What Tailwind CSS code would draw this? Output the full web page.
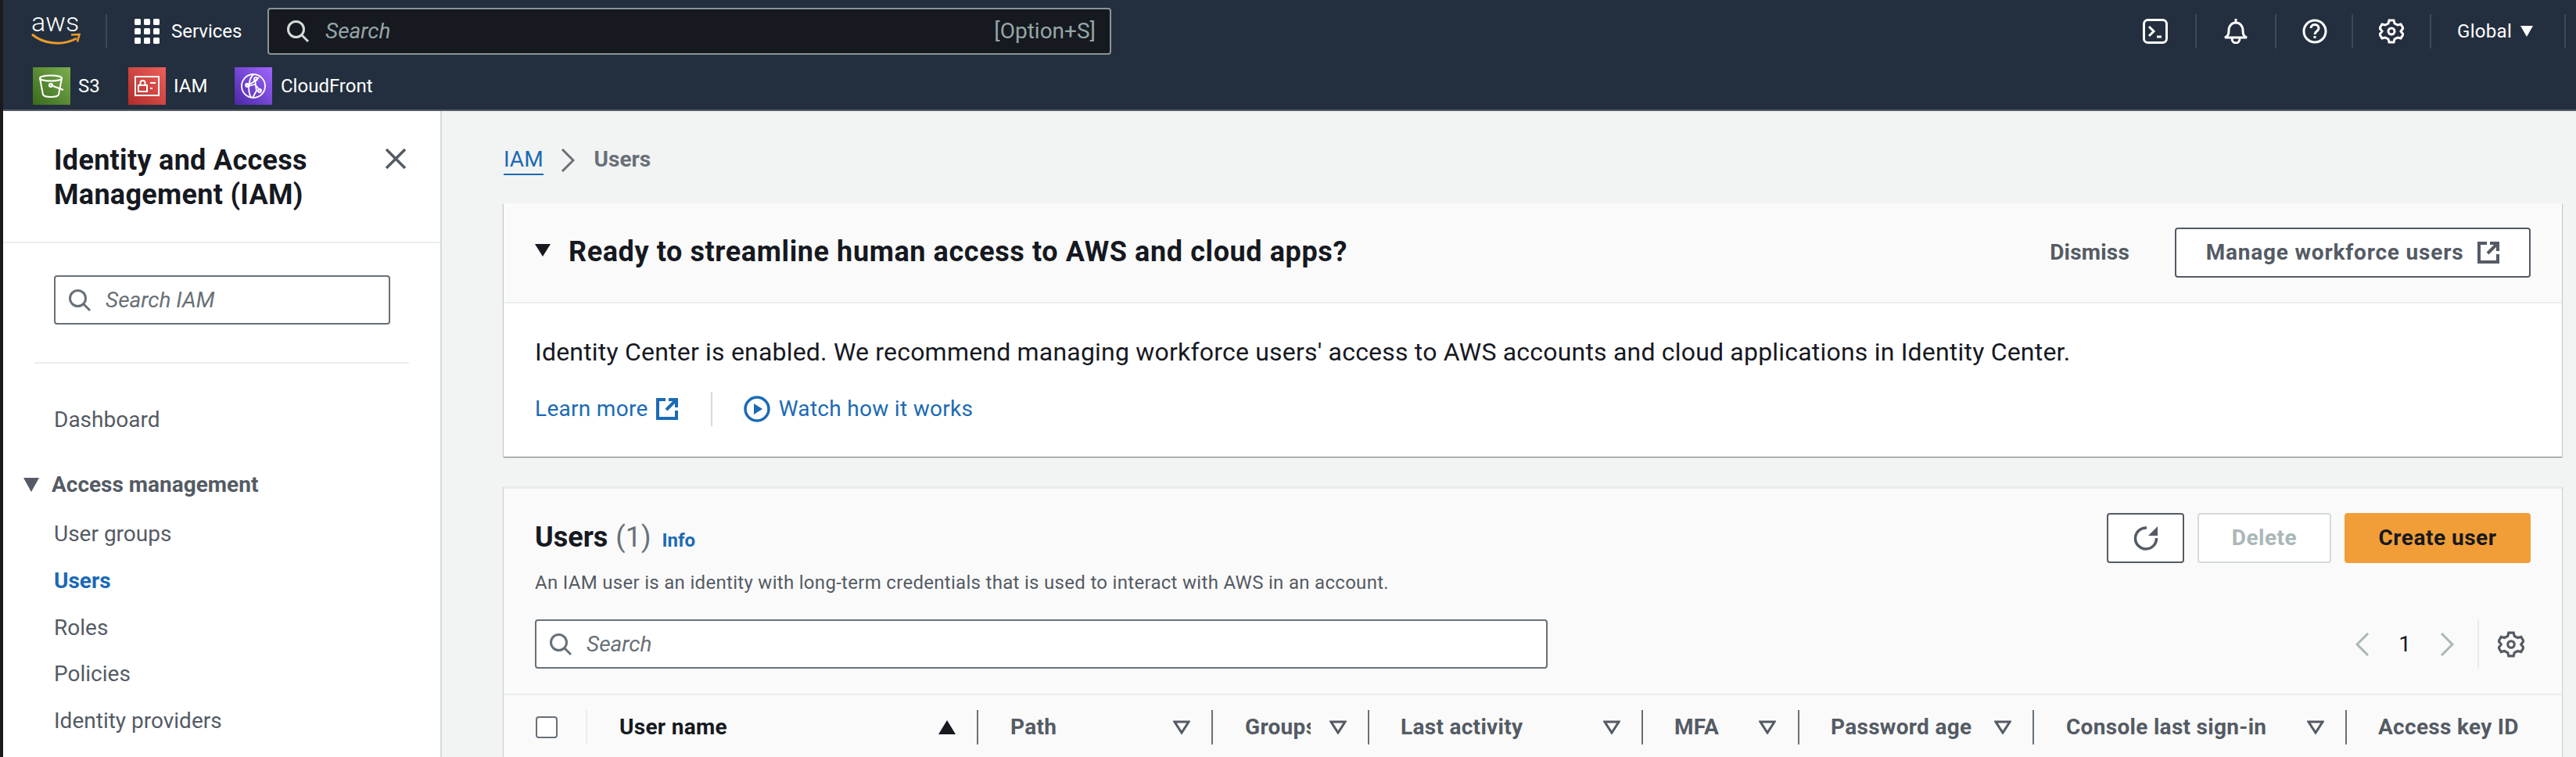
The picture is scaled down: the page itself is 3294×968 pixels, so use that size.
<!DOCTYPE html>
<html lang="en">

<head>
    <meta charset="UTF-8">
    <script src="https://cdn.jsdelivr.net/npm/@tailwindcss/browser@4"></script>
    <title>IAM - Users</title>
</head>

<body class="w-[3294px] h-[968px] overflow-hidden bg-[#f2f3f3] font-['Roboto',sans-serif] border-l-4 border-[#1a1a1a]">
    <!-- top nav -->
    <header class="h-[142px] bg-[#232f3e] border-b-2 border-[#545b64] text-white text-[24px]">
        <div class="h-[80px] flex items-center">
            <div class="w-[133px] h-[44px] pl-[36px] border-r-2 border-[#414750]">
                <span class="block h-[20px] text-[34px] leading-[20px] font-light">aws</span>
                <svg class="mt-[3px]" width="64" height="18" viewBox="0 0 64 18" fill="none" stroke="#ec9a2d">
                    <path d="M1 3C14 14 38 19 58 8" stroke-width="3" />
                    <path d="M51 3.500l10.500-.5-2.500 9.500" stroke-width="2.500" />
                </svg>
            </div>
            <svg class="ml-[35px]" width="32" height="32" viewBox="0 0 32 32" fill="#fff">
                <rect x="0" y="0" width="8" height="8" rx="1.500" /><rect x="12" y="0" width="8" height="8" rx="1.500" /><rect x="24" y="0" width="8" height="8" rx="1.500" />
                <rect x="0" y="12" width="8" height="8" rx="1.500" /><rect x="12" y="12" width="8" height="8" rx="1.500" /><rect x="24" y="12" width="8" height="8" rx="1.500" />
                <rect x="0" y="24" width="8" height="8" rx="1.500" /><rect x="12" y="24" width="8" height="8" rx="1.500" /><rect x="24" y="24" width="8" height="8" rx="1.500" />
            </svg>
            <span class="ml-[15px] w-[123px]">Services</span>
            <div class="w-[1079px] h-[60px] bg-[#16191f] border-2 border-[#879596] rounded-[4px] flex items-center pl-[22px] pr-[18px] text-[28px] text-[#95a5a6]">
                <svg width="30" height="30" viewBox="0 0 30 30" fill="none" stroke="#d5dbdb" stroke-width="3"><circle cx="12.500" cy="12.500" r="10" /><path d="M20 20l8 8" /></svg>
                <span class="ml-[20px] italic">Search</span>
                <span class="ml-auto">[Option+S]</span>
            </div>
            <div class="ml-auto flex items-center">
                <div class="w-[100px] h-[44px] flex items-center justify-end pr-[35px] border-r-2 border-[#414750]">
                    <svg width="32" height="32" viewBox="0 0 32 32" fill="none" stroke="#fff" stroke-width="3"><rect x="1.500" y="1.500" width="29" height="29" rx="5" /><path d="M8 10l6 6-6 6M18 23h6" /></svg>
                </div>
                <div class="w-[102px] h-[44px] flex items-center justify-center border-r-2 border-[#414750]">
                    <svg width="32" height="32" viewBox="0 0 32 32" fill="none" stroke="#fff" stroke-width="3"><path d="M16 0v5M2 24c4-2 5-4 5-9 0-6 4-10 9-10s9 4 9 10c0 5 1 7 5 9zM11 25c0 8 10 8 10 0" /></svg>
                </div>
                <div class="w-[98px] h-[44px] flex items-center justify-start pl-[33px] border-r-2 border-[#414750]">
                    <svg width="32" height="32" viewBox="0 0 32 32" fill="none" stroke="#fff" stroke-width="3"><circle cx="16" cy="16" r="14" /><path d="M11 12c0-6 10-6 10 0 0 4-5 4-5 8" /><path d="M16 22v3" /></svg>
                </div>
                <div class="w-[100px] h-[44px] flex items-center justify-center border-r-2 border-[#414750]">
                    <svg width="32" height="32" viewBox="0 0 32 32" fill="none" stroke="#fff" stroke-width="3"><path d="M13 2h6l1 4 4 2 4-1 3 5-3 4 3 4-3 5-4-1-4 2-1 4h-6l-1-4-4-2-4 1-3-5 3-4-3-4 3-5 4 1 4-2z" /><circle cx="16" cy="16" r="4" /></svg>
                </div>
                <div class="w-[172px] h-[44px] flex items-center pl-[33px] border-r-2 border-[#414750] tracking-[0.3px]">
                    <span>Global</span>
                    <svg class="ml-[11px]" width="16" height="14" viewBox="0 0 16 14" fill="#fff"><path d="M0 0h16l-8 14z" /></svg>
                </div>
                <div class="w-[13px]"></div>
            </div>
        </div>
        <div class="h-[48px] mt-[6px] flex items-center pl-[38px]">
            <div class="w-[48px] h-[48px] bg-gradient-to-tr from-[#3a6b1d] to-[#7cae4e] flex items-center justify-center">
                <svg width="32" height="30" viewBox="0 0 32 30" fill="none" stroke="#fff" stroke-width="2"><ellipse cx="15" cy="5" rx="14" ry="3.500" /><path d="M1 5l4 21c2 4 18 4 20 0l4-21" /><path d="M15 14l16 6" /><circle cx="15" cy="14" r="2" /></svg>
            </div>
            <span class="ml-[10px] w-[64px]">S3</span>
            <div class="w-[48px] h-[48px] bg-gradient-to-tr from-[#b32c2a] to-[#ec5f5a] flex items-center justify-center">
                <svg width="32" height="26" viewBox="0 0 32 26" fill="none" stroke="#fff" stroke-width="2"><rect x="1" y="1" width="30" height="24" /><rect x="5" y="12" width="11" height="8" /><path d="M7.500 12V9c0-4 6-4 6 0v3M20 9h7M20 16h3" /></svg>
            </div>
            <span class="ml-[10px] w-[78px]">IAM</span>
            <div class="w-[48px] h-[48px] bg-gradient-to-tr from-[#4d27a8] to-[#a166ff] flex items-center justify-center">
                <svg width="32" height="32" viewBox="0 0 32 32" fill="none" stroke="#fff" stroke-width="1.800"><circle cx="16" cy="16" r="15" /><path d="M16 1c-6 6-8 20-3 30M6 15c6-1 12-5 17-10M10 16l8-2 7 8M18 8l2 14-5 9" /><circle cx="8" cy="15" r="2" /><circle cx="19" cy="7" r="2" /><circle cx="24" cy="22" r="2" /></svg>
            </div>
            <span class="ml-[11px]">CloudFront</span>
        </div>
    </header>

    <div class="flex h-[826px]">
        <!-- side nav -->
        <aside class="w-[561px] shrink-0 bg-white border-r-2 border-[#d5dbdb] text-[28px] text-[#545b64]">
            <div class="h-[169px] border-b-2 border-[#eaeded] pl-[65px] pr-[44px] pt-[41px] flex justify-between items-start">
                <h1 class="text-[36px] leading-[44px] font-bold tracking-[0.3px] text-[#16191f] w-[400px]">Identity and Access Management (IAM)</h1>
                <svg class="mt-[7px]" width="26" height="26" viewBox="0 0 26 26" fill="none" stroke="#545b64" stroke-width="3.500"><path d="M1 1l24 24M25 1L1 25" /></svg>
            </div>
            <div class="mx-[40px] h-[154px] border-b-2 border-[#eaeded] pt-[41px] pl-[25px]">
                <div class="w-[430px] h-[63px] border-2 border-[#687078] rounded-[4px] flex items-center pl-[16px]">
                    <svg width="30" height="30" viewBox="0 0 30 30" fill="none" stroke="#687078" stroke-width="3"><circle cx="12.500" cy="12.500" r="10" /><path d="M20 20l8 8" /></svg>
                    <span class="ml-[18px] italic text-[#687078]">Search IAM</span>
                </div>
            </div>
            <div class="pl-[65px] leading-[36px]">
                <p class="mt-[54px]">Dashboard</p>
                <p class="mt-[47px] -ml-[39px] flex items-center font-bold"><svg class="mr-[16px]" width="20" height="18" viewBox="0 0 20 18" fill="#545b64"><path d="M0 0h20l-10 18z" /></svg>Access management</p>
                <p class="mt-[27px]">User groups</p>
                <p class="mt-[24px] font-bold text-[#1b6ab5]">Users</p>
                <p class="mt-[24px]">Roles</p>
                <p class="mt-[23px]">Policies</p>
                <p class="mt-[24px]">Identity providers</p>
            </div>
        </aside>

        <!-- content -->
        <main class="flex-1 min-w-0 pl-[79px] pr-[18px]">
            <nav class="h-[118px] pt-[44px] flex items-start text-[28px] leading-[36px]">
                <a class="text-[#1b6ab5] border-b-2 border-[#1b6ab5] h-[38px]">IAM</a>
                <svg class="ml-[22px] mt-[4px]" width="18" height="30" viewBox="0 0 18 30" fill="none" stroke="#687078" stroke-width="3"><path d="M2 1l14 14L2 29" /></svg>
                <span class="ml-[25px] font-bold text-[#687078]">Users</span>
            </nav>

            <section class="h-[324px] bg-white shadow-[0_1px_1px_0_rgba(0,28,36,0.3),1px_1px_1px_0_rgba(0,28,36,0.15),-1px_1px_1px_0_rgba(0,28,36,0.15)]">
                <div class="h-[128px] bg-[#fafafa] border-b-2 border-[#eaeded] flex items-center pl-[40px] pr-[40px]">
                    <svg class="mb-[6px]" width="20" height="16" viewBox="0 0 20 16" fill="#16191f"><path d="M0 0h20l-10 16z" /></svg>
                    <h2 class="ml-[23px] mb-[2px] text-[36px] font-bold tracking-[0.6px] text-[#16191f]">Ready to streamline human access to AWS and cloud apps?</h2>
                    <span class="ml-auto text-[28px] font-bold tracking-[0.2px] text-[#545b64]">Dismiss</span>
                    <button class="ml-[58px] w-[455px] h-[64px] bg-white border-2 border-[#545b64] rounded-[4px] flex items-center justify-center text-[28px] font-bold tracking-[0.8px] text-[#545b64]">
                        Manage workforce users
                        <svg class="ml-[18px]" width="28" height="28" viewBox="0 0 28 28" fill="none" stroke="#545b64" stroke-width="4"><path d="M12 2H2v24h24V16M16 2h10v10M26 2L13 15" /></svg>
                    </button>
                </div>
                <div class="pl-[40px] text-[32px] tracking-[0.2px] text-[#16191f] pt-[40px] leading-[44px]">Identity Center is enabled. We recommend managing workforce users' access to AWS accounts and cloud applications in Identity Center.</div>
                <div class="pl-[40px] mt-[29px] flex items-center text-[28px] tracking-[0.3px] text-[#1b6ab5]">
                    <span>Learn more</span>
                    <svg class="ml-[10px]" width="28" height="28" viewBox="0 0 28 28" fill="none" stroke="#1b6ab5" stroke-width="4"><path d="M12 2H2v24h24V16M16 2h10v10M26 2L13 15" /></svg>
                    <div class="ml-[42px] h-[44px] border-l-2 border-[#d5dbdb]"></div>
                    <svg class="ml-[40px]" width="34" height="34" viewBox="0 0 34 34" fill="none" stroke="#1b6ab5" stroke-width="3.500"><circle cx="17" cy="17" r="15" /><path d="M13 10l11 7-11 7z" fill="#1b6ab5" stroke="none" /></svg>
                    <span class="ml-[11px]">Watch how it works</span>
                </div>
            </section>

            <section class="mt-[39px] h-[400px] bg-[#fafafa] border-t-2 border-[#eaeded] shadow-[1px_0_1px_0_rgba(0,28,36,0.15),-1px_0_1px_0_rgba(0,28,36,0.15)]">
                <div class="h-[264px] border-b-2 border-[#eaeded] pl-[40px] pr-[40px] pt-[31px]">
                    <div class="flex items-start">
                        <div class="pt-[4px]">
                            <div class="flex items-baseline h-[69px]">
                                <h2 class="text-[36px] font-bold text-[#16191f]">Users</h2>
                                <span class="ml-[10px] text-[36px] text-[#687078]">(1)</span>
                                <a class="ml-[14px] text-[24px] font-bold text-[#1b6ab5]">Info</a>
                            </div>
                            <p class="text-[24px] leading-[32px] tracking-[0.3px] text-[#545b64]">An IAM user is an identity with long-term credentials that is used to interact with AWS in an account.</p>
                        </div>
                        <div class="ml-auto flex items-center">
                            <button class="w-[99px] h-[64px] bg-white border-2 border-[#545b64] rounded-[4px] flex items-center justify-center">
                                <svg width="32" height="32" viewBox="0 0 32 32" fill="none" stroke="#545b64" stroke-width="3.500"><path d="M17 3A13.500 13.500 0 1 0 29.500 16" /><path d="M31 1v12H19z" fill="#545b64" stroke="none" /></svg>
                            </button>
                            <button class="ml-[17px] w-[171px] h-[64px] bg-white border-2 border-[#d5dbdb] rounded-[4px] text-[28px] font-bold tracking-[0.5px] text-[#aab7b8]">Delete</button>
                            <button class="ml-[17px] w-[238px] h-[64px] bg-[#f29e38] rounded-[4px] text-[28px] font-bold tracking-[0.5px] text-[#16191f]">Create user</button>
                        </div>
                    </div>
                    <div class="mt-[31px] flex items-center">
                        <div class="w-[1295px] h-[63px] bg-white border-2 border-[#687078] rounded-[4px] flex items-center pl-[16px]">
                            <svg width="30" height="30" viewBox="0 0 30 30" fill="none" stroke="#687078" stroke-width="3"><circle cx="12.500" cy="12.500" r="10" /><path d="M20 20l8 8" /></svg>
                            <span class="ml-[18px] text-[28px] italic text-[#687078]">Search</span>
                        </div>
                        <div class="ml-auto flex items-center h-[63px]">
                            <svg width="18" height="30" viewBox="0 0 18 30" fill="none" stroke="#aab7b8" stroke-width="3"><path d="M16 1L2 15l14 14" /></svg>
                            <span class="ml-[37px] text-[28px] text-[#16191f]">1</span>
                            <svg class="ml-[37px]" width="18" height="30" viewBox="0 0 18 30" fill="none" stroke="#aab7b8" stroke-width="3"><path d="M2 1l14 14L2 29" /></svg>
                            <div class="ml-[30px] h-[63px] border-l-2 border-[#eaeded]"></div>
                            <svg class="ml-[24px] mr-[8px]" width="34" height="34" viewBox="0 0 32 32" fill="none" stroke="#545b64" stroke-width="3"><path d="M13 2h6l1 4 4 2 4-1 3 5-3 4 3 4-3 5-4-1-4 2-1 4h-6l-1-4-4-2-4 1-3-5 3-4-3-4 3-5 4 1 4-2z" /><circle cx="16" cy="16" r="4" /></svg>
                        </div>
                    </div>
                </div>

                <!-- table header -->
                <div class="flex items-center h-[44px] mt-[19px] text-[28px] font-bold tracking-[0.3px] text-[#545b64] whitespace-nowrap">
                    <div class="w-[107px] h-full flex items-center pl-[41px] border-r-2 border-[#eaeded] shrink-0"><span class="w-[28px] h-[28px] bg-white border-2 border-[#687078] rounded-[4px]"></span></div>
                    <div class="w-[500px] h-full flex items-center pl-[41px] pr-[27px] border-r-2 border-[#687078] shrink-0 text-[#16191f]"><span>User name</span><svg class="ml-auto" width="22" height="18" viewBox="0 0 22 18" fill="#16191f"><path d="M0 18h22L11 0z" /></svg></div>
                    <div class="w-[300px] h-full flex items-center pl-[41px] pr-[27px] border-r-2 border-[#687078] shrink-0"><span>Path</span><svg class="ml-auto" width="22" height="18" viewBox="0 0 22 18" fill="none" stroke="#545b64" stroke-width="3"><path d="M2 2h18l-9 14z" /></svg></div>
                    <div class="w-[200px] h-full flex items-center pl-[41px] pr-[27px] border-r-2 border-[#687078] shrink-0"><span class="w-[84px] overflow-hidden">Groups</span><svg class="ml-auto" width="22" height="18" viewBox="0 0 22 18" fill="none" stroke="#545b64" stroke-width="3"><path d="M2 2h18l-9 14z" /></svg></div>
                    <div class="w-[350px] h-full flex items-center pl-[40px] pr-[27px] border-r-2 border-[#687078] shrink-0"><span>Last activity</span><svg class="ml-auto" width="22" height="18" viewBox="0 0 22 18" fill="none" stroke="#545b64" stroke-width="3"><path d="M2 2h18l-9 14z" /></svg></div>
                    <div class="w-[200px] h-full flex items-center pl-[40px] pr-[28px] border-r-2 border-[#687078] shrink-0"><span>MFA</span><svg class="ml-auto" width="22" height="18" viewBox="0 0 22 18" fill="none" stroke="#545b64" stroke-width="3"><path d="M2 2h18l-9 14z" /></svg></div>
                    <div class="w-[300px] h-full flex items-center pl-[40px] pr-[27px] border-r-2 border-[#687078] shrink-0"><span>Password age</span><svg class="ml-auto" width="22" height="18" viewBox="0 0 22 18" fill="none" stroke="#545b64" stroke-width="3"><path d="M2 2h18l-9 14z" /></svg></div>
                    <div class="w-[400px] h-full flex items-center pl-[41px] pr-[27px] border-r-2 border-[#687078] shrink-0"><span>Console last sign-in</span><svg class="ml-auto" width="22" height="18" viewBox="0 0 22 18" fill="none" stroke="#545b64" stroke-width="3"><path d="M2 2h18l-9 14z" /></svg></div>
                    <div class="pl-[40px]">Access key ID</div>
                </div>
            </section>
        </main>
    </div>
</body>

</html>
